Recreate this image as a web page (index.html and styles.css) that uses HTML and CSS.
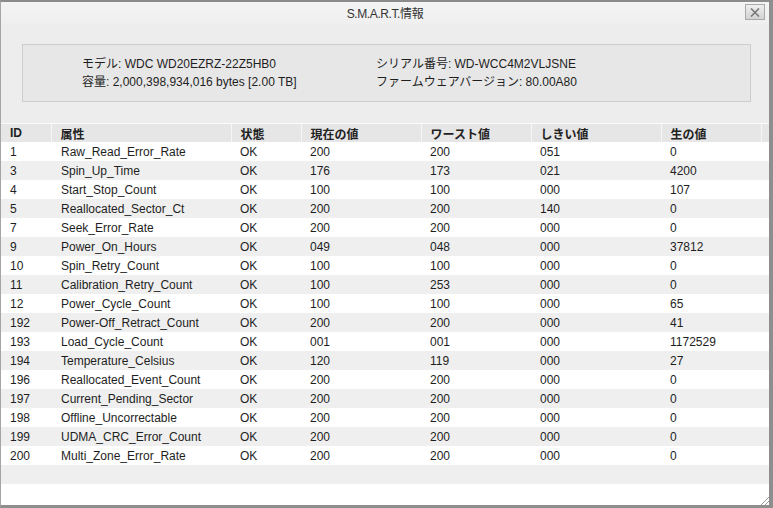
FILE: index.html
```html
<!DOCTYPE html>
<html lang="ja">
<head>
    <meta charset="UTF-8">
    <title>S.M.A.R.T.情報</title>
    <link rel="stylesheet" href="styles.css">
</head>
<body>
    <div class="window">
        <div class="titlebar">
            <span></span>
            <span class="title">S.M.A.R.T.情報</span>
            <button class="close" aria-label="閉じる">
                <svg width="10" height="9" viewBox="0 0 10 9">
                    <path d="M1 0.5 L9 8.5 M9 0.5 L1 8.5" stroke="#7a7a7a" stroke-width="1.6" fill="none"/>
                </svg>
            </button>
        </div>

        <div class="content">
            <div class="info-box">
                <div class="info-col left">
                    <div>モデル: WDC WD20EZRZ-22Z5HB0</div>
                    <div>容量: 2,000,398,934,016 bytes [2.00 TB]</div>
                </div>
                <div class="info-col">
                    <div>シリアル番号: WD-WCC4M2VLJSNE</div>
                    <div>ファームウェアバージョン: 80.00A80</div>
                </div>
            </div>
        </div>

        <div class="table-area">
            <table>
                <thead>
                    <tr>
                        <th class="c-id">ID</th>
                        <th class="c-attr">属性</th>
                        <th class="c-state">状態</th>
                        <th class="c-cur">現在の値</th>
                        <th class="c-worst">ワースト値</th>
                        <th class="c-thr">しきい値</th>
                        <th class="c-raw">生の値</th>
                        <th class="c-end"></th>
                    </tr>
                </thead>
                <tbody>
                    <tr><td>1</td><td>Raw_Read_Error_Rate</td><td>OK</td><td>200</td><td>200</td><td>051</td><td>0</td><td></td></tr>
                    <tr><td>3</td><td>Spin_Up_Time</td><td>OK</td><td>176</td><td>173</td><td>021</td><td>4200</td><td></td></tr>
                    <tr><td>4</td><td>Start_Stop_Count</td><td>OK</td><td>100</td><td>100</td><td>000</td><td>107</td><td></td></tr>
                    <tr><td>5</td><td>Reallocated_Sector_Ct</td><td>OK</td><td>200</td><td>200</td><td>140</td><td>0</td><td></td></tr>
                    <tr><td>7</td><td>Seek_Error_Rate</td><td>OK</td><td>200</td><td>200</td><td>000</td><td>0</td><td></td></tr>
                    <tr><td>9</td><td>Power_On_Hours</td><td>OK</td><td>049</td><td>048</td><td>000</td><td>37812</td><td></td></tr>
                    <tr><td>10</td><td>Spin_Retry_Count</td><td>OK</td><td>100</td><td>100</td><td>000</td><td>0</td><td></td></tr>
                    <tr><td>11</td><td>Calibration_Retry_Count</td><td>OK</td><td>100</td><td>253</td><td>000</td><td>0</td><td></td></tr>
                    <tr><td>12</td><td>Power_Cycle_Count</td><td>OK</td><td>100</td><td>100</td><td>000</td><td>65</td><td></td></tr>
                    <tr><td>192</td><td>Power-Off_Retract_Count</td><td>OK</td><td>200</td><td>200</td><td>000</td><td>41</td><td></td></tr>
                    <tr><td>193</td><td>Load_Cycle_Count</td><td>OK</td><td>001</td><td>001</td><td>000</td><td>1172529</td><td></td></tr>
                    <tr><td>194</td><td>Temperature_Celsius</td><td>OK</td><td>120</td><td>119</td><td>000</td><td>27</td><td></td></tr>
                    <tr><td>196</td><td>Reallocated_Event_Count</td><td>OK</td><td>200</td><td>200</td><td>000</td><td>0</td><td></td></tr>
                    <tr><td>197</td><td>Current_Pending_Sector</td><td>OK</td><td>200</td><td>200</td><td>000</td><td>0</td><td></td></tr>
                    <tr><td>198</td><td>Offline_Uncorrectable</td><td>OK</td><td>200</td><td>200</td><td>000</td><td>0</td><td></td></tr>
                    <tr><td>199</td><td>UDMA_CRC_Error_Count</td><td>OK</td><td>200</td><td>200</td><td>000</td><td>0</td><td></td></tr>
                    <tr><td>200</td><td>Multi_Zone_Error_Rate</td><td>OK</td><td>200</td><td>200</td><td>000</td><td>0</td><td></td></tr>
                    <tr class="empty"><td colspan="8"></td></tr>
                </tbody>
            </table>
            <div class="grip"></div>
        </div>
    </div>
</body>
</html>
```

FILE: styles.css
```css
* {
    box-sizing: border-box;
}

html, body {
    margin: 0;
    padding: 0;
    background: #8a8a8a;
}

body {
    font-family: "Liberation Sans", "Noto Sans CJK JP", Arial, sans-serif;
    font-size: 12px;
    color: #1e1e1e;
    width: 773px;
    height: 508px;
    overflow: hidden;
}

.window {
    width: 773px;
    height: 508px;
    display: flex;
    flex-direction: column;
    background: #ededed;
    border-top: 2px solid #8c8c8c;
    border-left: 1px solid #a5a5a5;
    border-right: 4px solid #8e8e8e;
    border-bottom: 3px solid #8e8e8e;
}

.titlebar {
    height: 22px;
    display: grid;
    grid-template-columns: 1fr auto 1fr;
    align-items: center;
    background: linear-gradient(#f4f4f4, #efefef);
}

.title {
    font-size: 12px;
    color: #333;
    letter-spacing: -0.4px;
    padding-bottom: 2px;
}

.close {
    justify-self: end;
    margin-right: 4px;
    margin-bottom: 2px;
    width: 20px;
    height: 16px;
    padding: 0;
    border: 1px solid #a9a9a9;
    background: linear-gradient(#efefef, #d2d2d2);
    display: flex;
    align-items: center;
    justify-content: center;
    cursor: pointer;
}

.content {
    padding: 20px 18px 0 21px;
}

.info-box {
    height: 58px;
    padding: 10px 0 0 59px;
    display: flex;
    line-height: 18px;
    background: #e7e7e7;
    border: 1px solid #cdcdcd;
}

.info-col.left {
    width: 294px;
}

.table-area {
    flex: 1;
    margin-top: 21px;
    position: relative;
    background: #fff;
    border-top: 1px solid #fafafa;
    overflow: hidden;
}

table {
    width: 100%;
    border-collapse: collapse;
    table-layout: fixed;
}

th, td {
    height: 19px;
    padding: 0 0 0 9px;
    text-align: left;
    white-space: nowrap;
    font-weight: normal;
}

td:nth-child(2) {
    padding-left: 10px;
}

th {
    height: 18px;
    font-weight: bold;
    background: #e6e6e6;
    border-right: 1px solid #f6f6f6;
    color: #222;
}

tbody tr:nth-child(even) td {
    background: #efefef;
}

tbody tr.empty td {
    height: 19px;
}

.c-id { width: 50px; }
.c-attr { width: 180px; }
.c-state { width: 70px; }
.c-cur { width: 120px; }
.c-worst { width: 110px; }
.c-thr { width: 130px; }
.c-raw { width: 100px; }
.c-end { border-right: none; }

.grip {
    position: absolute;
    right: 0;
    bottom: 0;
    width: 10px;
    height: 10px;
    background: repeating-linear-gradient(135deg, transparent 0 2px, #9a9a9a 2px 3px);
    clip-path: polygon(100% 0, 100% 100%, 0 100%);
}
```
